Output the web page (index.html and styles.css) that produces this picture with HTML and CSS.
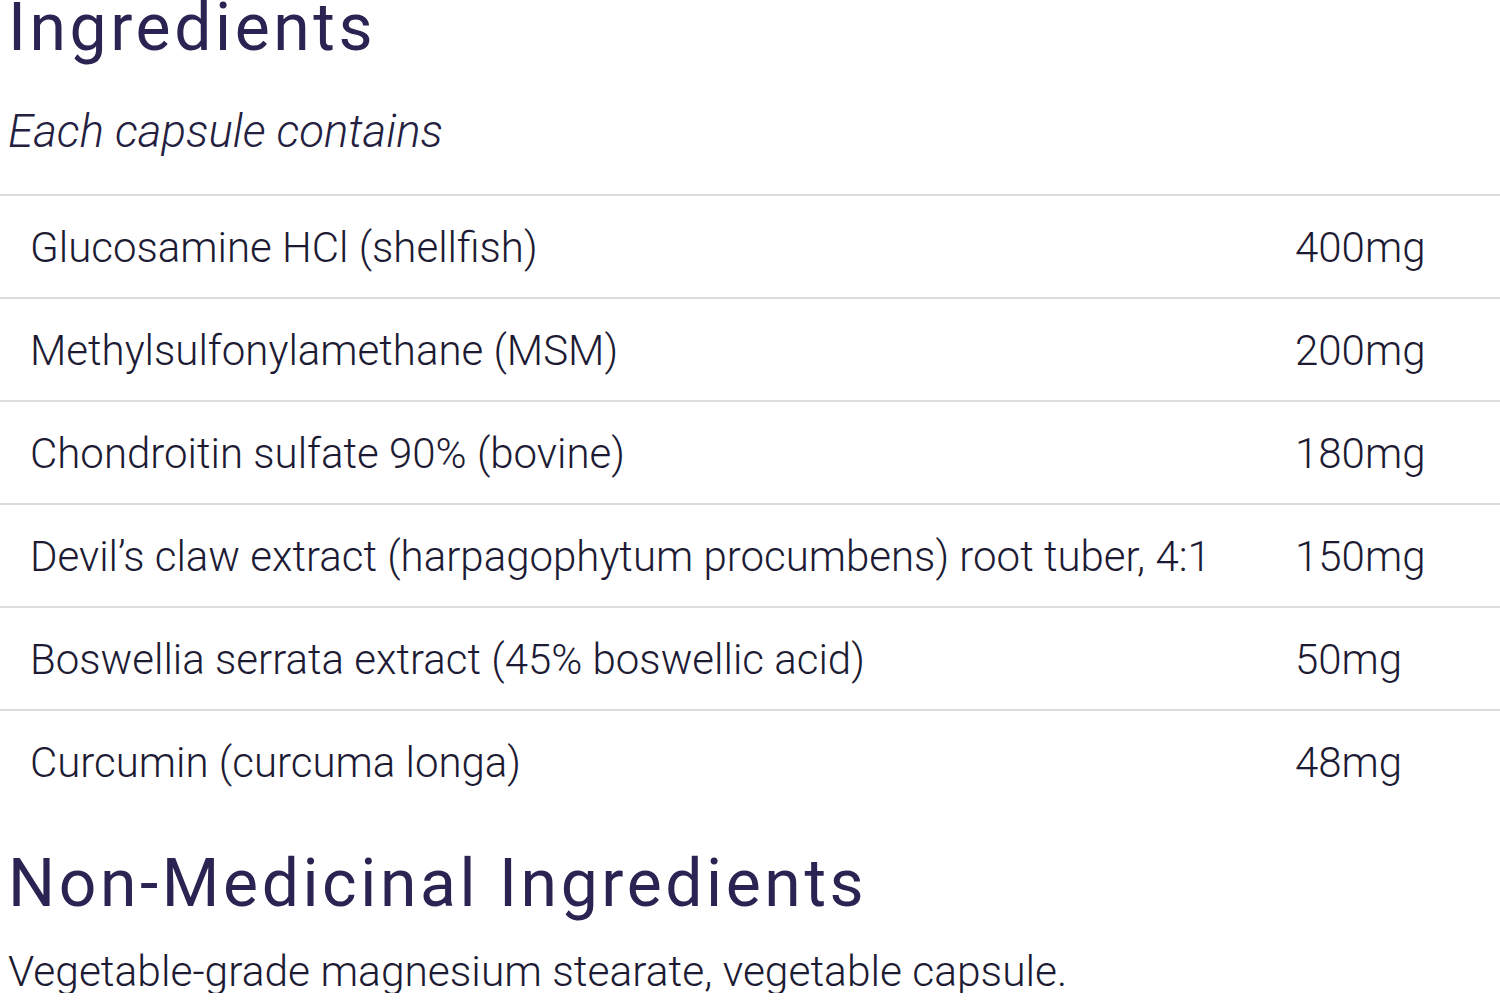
FILE: index.html
```html
<!DOCTYPE html>
<html lang="en">
<head>
<meta charset="utf-8">
<title>Ingredients</title>
<link rel="stylesheet" href="styles.css">
</head>
<body>
<main class="page">
  <h2 class="heading heading-top">Ingredients</h2>
  <p class="subtitle">Each capsule contains</p>
  <table class="ingredients">
    <tbody>
      <tr><td class="name">Glucosamine HCl (shellfish)</td><td class="amount">400mg</td></tr>
      <tr><td class="name">Methylsulfonylamethane (MSM)</td><td class="amount">200mg</td></tr>
      <tr><td class="name">Chondroitin sulfate 90% (bovine)</td><td class="amount">180mg</td></tr>
      <tr><td class="name">Devil’s claw extract (harpagophytum procumbens) root tuber, 4:1</td><td class="amount">150mg</td></tr>
      <tr><td class="name">Boswellia serrata extract (45% boswellic acid)</td><td class="amount">50mg</td></tr>
      <tr><td class="name">Curcumin (curcuma longa)</td><td class="amount">48mg</td></tr>
    </tbody>
  </table>
  <h2 class="heading heading-non">Non-Medicinal Ingredients</h2>
  <p class="body-text">Vegetable-grade magnesium stearate, vegetable capsule.</p>
</main>
</body>
</html>
```

FILE: styles.css
```css
html, body {
  margin: 0;
  padding: 0;
  background: #ffffff;
}
body {
  font-family: Roboto, "Liberation Sans", sans-serif;
  color: #1d1b34;
  overflow: hidden;
}
.page {
  width: 1500px;
}
.heading {
  margin: 0;
  padding-left: 8px;
  font-size: 66px;
  font-weight: 400;
  line-height: 1;
  color: #2b2452;
  letter-spacing: 3.6px;
}
.heading-top {
  margin-top: -5px;
}
.subtitle {
  margin: 48px 0 0;
  padding-left: 8px;
  font-size: 45.6px;
  font-style: italic;
  font-weight: 300;
  line-height: 1;
  color: #24203f;
}
.ingredients {
  width: 100%;
  margin-top: 39px;
  border-collapse: collapse;
  border-top: 2px solid #dcdcdc;
}
.ingredients tr {
  border-bottom: 2px solid #dcdcdc;
}
.ingredients tr:last-child {
  border-bottom: none;
}
.ingredients td {
  height: 99px;
  padding: 2px 0 0;
  font-size: 42px;
  font-weight: 300;
  vertical-align: middle;
}
.ingredients .name {
  padding-left: 30px;
}
.ingredients .amount {
  width: 205px;
}
.heading-non {
  margin-top: 39px;
}
.body-text {
  margin: 34px 0 0;
  padding-left: 8px;
  font-size: 42.5px;
  font-weight: 300;
  line-height: 1;
}
```
